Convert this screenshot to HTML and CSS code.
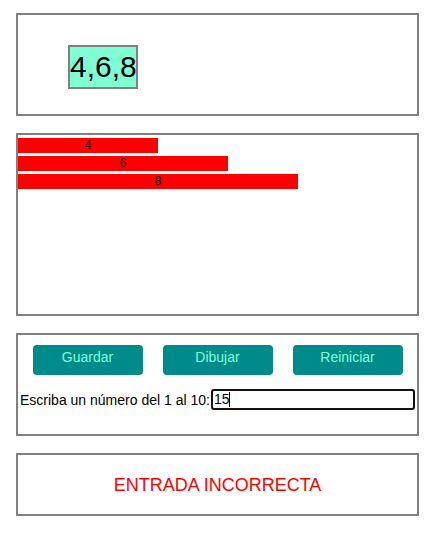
FILE: index.html
```html
<!DOCTYPE html>
<html lang="es">
<head>
<meta charset="utf-8">
<title>Números</title>
<link rel="stylesheet" href="styles.css">
</head>
<body>
<main class="page">
  <section class="panel panel-display">
    <div class="numbers">4,6,8</div>
  </section>
  <section class="panel panel-chart">
    <div class="bar" style="width:140px">4</div>
    <div class="bar" style="width:210px">6</div>
    <div class="bar" style="width:280px">8</div>
  </section>
  <section class="panel panel-controls">
    <div class="buttons">
      <button class="btn" type="button">Guardar</button>
      <button class="btn" type="button">Dibujar</button>
      <button class="btn" type="button">Reiniciar</button>
    </div>
    <div class="entry">
      <label class="entry-label" for="num">Escriba un número del 1 al 10:</label>
      <div class="entry-input" id="num">15<span class="caret"></span></div>
    </div>
  </section>
  <section class="panel panel-message">
    <p class="message">ENTRADA INCORRECTA</p>
  </section>
</main>
</body>
</html>
```
FILE: styles.css
```css
* { box-sizing: border-box; }
html, body { margin: 0; padding: 0; background: #fff; }
body {
  font-family: "Liberation Sans", Arial, sans-serif;
  color: #000;
}
.page {
  padding: 13px 0 0 16px;
  display: flex;
  flex-direction: column;
  gap: 17px;
}
.panel {
  width: 403px;
  border: 2px solid #808080;
  background: #fff;
}
.panel-display { height: 103px; padding: 30px 0 0 50px; }
.numbers {
  width: 70px;
  height: 44px;
  border: 2px solid #808080;
  background: #7fffd4;
  font-size: 30px;
  line-height: 40px;
  white-space: nowrap;
  overflow: hidden;
}
.panel-chart {
  height: 183px;
  padding-top: 3px;
  display: flex;
  flex-direction: column;
  gap: 3px;
}
.bar {
  height: 15px;
  background: #ff0000;
  font-size: 12px;
  line-height: 15px;
  text-align: center;
  color: #000;
}
.panel-controls { height: 103px; padding-top: 10px; }
.buttons {
  display: flex;
  justify-content: center;
}
.btn {
  width: 110px;
  height: 30px;
  margin: 0 10px;
  border: none;
  border-radius: 4px;
  background: #008b8b;
  color: #7fffd4;
  font-family: "Liberation Sans", Arial, sans-serif;
  font-size: 14px;
  line-height: 16px;
  padding: 4px 0 0;
  display: flex;
  justify-content: center;
  align-items: flex-start;
}
.entry {
  display: flex;
  align-items: center;
  margin-top: 14px;
  padding-left: 2px;
}
.entry-label { font-size: 14px; line-height: 16px; }
.entry-input {
  width: 204px;
  height: 21px;
  margin-left: 1px;
  border: 2px solid #111;
  border-radius: 3px;
  font-size: 14px;
  line-height: 17px;
  padding-left: 1px;
  display: flex;
  align-items: center;
}
.caret {
  display: inline-block;
  width: 1px;
  height: 15px;
  background: #000;
}
.panel-message {
  height: 63px;
  display: flex;
  align-items: center;
  justify-content: center;
}
.message {
  margin: 0;
  color: #ff0000;
  font-size: 18px;
  line-height: 20px;
}
```
